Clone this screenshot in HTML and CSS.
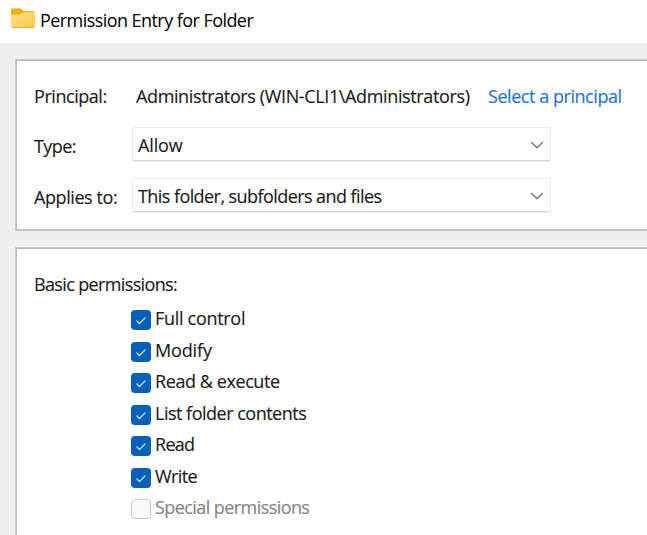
FILE: index.html
```html
<!DOCTYPE html>
<html lang="en">
<head>
<meta charset="utf-8">
<title>Permission Entry for Folder</title>
<link rel="stylesheet" href="styles.css">
</head>
<body>
<header class="titlebar">
  <svg class="folder" width="26" height="22" viewBox="0 0 26 22">
    <defs><linearGradient id="g" x1="0" y1="0" x2="1" y2="1"><stop offset="0" stop-color="#ffe08a"/><stop offset="1" stop-color="#fcc848"/></linearGradient></defs>
    <path d="M1 2.500Q1 0.500 2.500 0.500H10.500L13.500 3H23Q24.500 3 24.500 5V12H1Z" fill="#f5ad0c"/>
    <path d="M1 6.500H10.500L13.500 4.300H23.500Q25 4.300 25 5.800V18Q25 20 23 20H3Q1 20 1 18Z" fill="url(#g)"/>
    <path d="M1.500 19Q2 20 3 20H23Q24.200 20 24.700 19Z" fill="#e5ad32"/>
  </svg>
  <h1 class="title">Permission Entry for Folder</h1>
</header>
<main class="content">
  <section class="panel details">
    <div class="row"><span class="label principal">Principal:</span><span class="value account">Administrators (WIN-CLI1\Administrators)</span><a class="link">Select a principal</a></div>
    <div class="row"><span class="label type">Type:</span><div class="combo"><span class="allow">Allow</span><svg class="chevron" width="14" height="8" viewBox="0 0 14 8"><path d="M1 1L7 6.700L13 1"/></svg></div></div>
    <div class="row"><span class="label applies">Applies to:</span><div class="combo"><span class="scope">This folder, subfolders and files</span><svg class="chevron" width="14" height="8" viewBox="0 0 14 8"><path d="M1 1L7 6.700L13 1"/></svg></div></div>
  </section>
  <section class="panel permissions">
    <h2 class="heading">Basic permissions:</h2>
    <ul class="list">
      <li class="item"><svg class="box" viewBox="0 0 20 20"><path d="M5.500 10.500L8.500 13.500L14.500 7.500"/></svg><span class="full">Full control</span></li>
      <li class="item"><svg class="box" viewBox="0 0 20 20"><path d="M5.500 10.500L8.500 13.500L14.500 7.500"/></svg><span class="modify">Modify</span></li>
      <li class="item"><svg class="box" viewBox="0 0 20 20"><path d="M5.500 10.500L8.500 13.500L14.500 7.500"/></svg><span class="execute">Read &amp; execute</span></li>
      <li class="item"><svg class="box" viewBox="0 0 20 20"><path d="M5.500 10.500L8.500 13.500L14.500 7.500"/></svg><span class="contents">List folder contents</span></li>
      <li class="item"><svg class="box" viewBox="0 0 20 20"><path d="M5.500 10.500L8.500 13.500L14.500 7.500"/></svg><span class="read">Read</span></li>
      <li class="item"><svg class="box" viewBox="0 0 20 20"><path d="M5.500 10.500L8.500 13.500L14.500 7.500"/></svg><span class="write">Write</span></li>
      <li class="item disabled"><span class="box"></span><span class="special">Special permissions</span></li>
    </ul>
  </section>
</main>
</body>
</html>
```
FILE: styles.css
```css
* { box-sizing: border-box; }
body {
  margin: 0;
  height: 535px;
  overflow: hidden;
  background: #efefef;
  color: #1b1b1b;
  font: 18px/24px "Open Sans", "Noto Sans", sans-serif;
  white-space: nowrap;
  -webkit-text-stroke: 0.15px;
}
.titlebar { display: flex; height: 43px; padding: 8px 0 0 10px; background: #fff; }
.folder { flex: none; }
.title { margin: 0 0 0 4px; font-size: 18px; font-weight: 400; letter-spacing: -0.56px; color: #000; -webkit-text-stroke: 0; }
.content { padding: 16px 0 0 15px; }
.panel { background: #fff; border: 1px solid #c8c8c8; border-right: 0; box-shadow: inset 1px 1px 0 #bababa, inset 0 -1px 0 #c4c4c4; }
.details { display: grid; grid-template-rows: 34px 34px 34px; row-gap: 17px; height: 172px; padding: 16px 0 0 18px; }
.row { display: flex; align-items: center; }
.label { width: 98px; flex: none; }
.type, .applies { padding-top: 3px; }
.account { width: 356px; padding-left: 4px; letter-spacing: -0.37px; }
.value, .link, .principal { padding-top: 6px; }
.principal { letter-spacing: -0.45px; }
.type { letter-spacing: -0.6px; }
.applies { letter-spacing: -0.42px; }
.allow { letter-spacing: -0.15px; }
.scope { letter-spacing: -0.57px; }
.allow, .scope { padding-top: 1px; }
.link { color: #1d73dc; letter-spacing: -0.45px; }
.combo {
  display: flex; align-items: center; justify-content: space-between;
  width: 419px; height: 34px; padding: 0 6px 0 5px;
  border: 1px solid #ececec; border-bottom-color: #d6d6d6; border-radius: 2px;
  box-shadow: 0 1px 0 #ededed;
}
.chevron { margin-top: 1px; }
.chevron path { fill: none; stroke: #808080; stroke-width: 1.6; }
.permissions { height: 300px; margin-top: 16px; padding: 24px 0 0 18px; }
.heading { margin: 0; font: inherit; letter-spacing: -0.64px; }
.list { margin: 10px 0 0 97px; padding: 0; list-style: none; }
.item { display: flex; height: 31.5px; gap: 4px; }
.full { letter-spacing: -0.3px; }
.modify { letter-spacing: -0.15px; }
.execute { letter-spacing: -0.42px; }
.contents { letter-spacing: -0.5px; }
.read { letter-spacing: -0.7px; }
.write { letter-spacing: -0.6px; }
.special { letter-spacing: -0.57px; }
.box { flex: none; width: 20px; height: 20px; margin-top: 4px; background: #0560b8; border-radius: 4px; }
.box path { fill: none; stroke: #c5dcf2; stroke-width: 1.3; }
.disabled { color: #858585; }
.disabled .box { background: #f9f9f9; border: 1.5px solid #cacaca; }
```
